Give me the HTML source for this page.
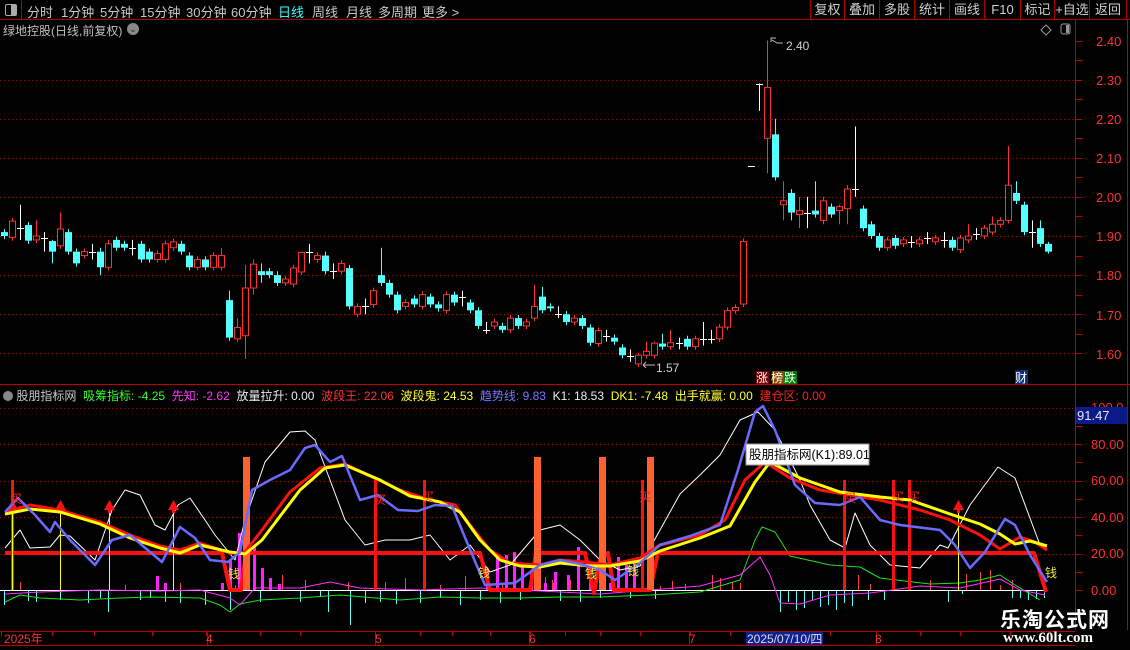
<!DOCTYPE html>
<html><head><meta charset="utf-8">
<style>
html,body{margin:0;padding:0;background:#000;width:1130px;height:650px;overflow:hidden;}
body{font-family:"Liberation Sans","Noto Sans CJK SC",sans-serif;position:relative;}
.t{position:absolute;white-space:nowrap;}
#top{position:absolute;left:0;top:0;width:1130px;height:19px;border-bottom:1px solid #b00000;}
.tab{position:absolute;top:2px;font-size:13px;color:#c8c8c8;}
.btn{position:absolute;top:0;height:19px;border-left:1px solid #b00000;font-size:13px;color:#d0d0d0;text-align:center;line-height:19px;}
svg{position:absolute;left:0;top:0;}
</style></head><body>
<div id="top">
 <div style="position:absolute;left:0;top:0;width:21px;height:19px;border-right:1px solid #b00000;"></div>
 <div style="position:absolute;left:5px;top:4px;width:10px;height:10px;border:1px solid #aaa;border-radius:2px;"><div style="position:absolute;right:0;top:0;width:5px;height:10px;background:#aaa"></div></div>
 <span class="tab" style="left:27px">分时</span>
 <span class="tab" style="left:61px">1分钟</span>
 <span class="tab" style="left:100px">5分钟</span>
 <span class="tab" style="left:140px">15分钟</span>
 <span class="tab" style="left:186px">30分钟</span>
 <span class="tab" style="left:231px">60分钟</span>
 <span class="tab" style="left:278px;color:#3ff">日线</span>
 <span class="tab" style="left:312px">周线</span>
 <span class="tab" style="left:346px">月线</span>
 <span class="tab" style="left:378px">多周期</span>
 <span class="tab" style="left:422px">更多 &gt;</span>
 <div class="btn" style="left:810px;width:33px">复权</div>
 <div class="btn" style="left:844px;width:34px">叠加</div>
 <div class="btn" style="left:879px;width:34px">多股</div>
 <div class="btn" style="left:914px;width:34px">统计</div>
 <div class="btn" style="left:949px;width:34px">画线</div>
 <div class="btn" style="left:984px;width:35px">F10</div>
 <div class="btn" style="left:1020px;width:33px">标记</div>
 <div class="btn" style="left:1054px;width:34px">+自选</div>
 <div class="btn" style="left:1089px;width:36px;border-right:1px solid #b00000">返回</div>
</div>
<div class="t" style="left:3px;top:22px;font-size:12px;color:#c0c0c0">绿地控股(日线,前复权)</div>
<div style="position:absolute;left:127px;top:23px;width:12px;height:12px;border-radius:50%;background:#888;color:#222;font-size:9px;line-height:12px;text-align:center">⌄</div>

<svg id="s" width="1130" height="650" viewBox="0 0 1130 650">
 <g id="grid"></g>
 <g id="cand"></g>
 <g id="ind"></g>
 <line x1="1075.5" y1="20" x2="1075.5" y2="630" stroke="#c00000"/>
 <line x1="1127.5" y1="20" x2="1127.5" y2="630" stroke="#c00000"/>
 <line x1="0" y1="384.5" x2="1130" y2="384.5" stroke="#c00000"/>
 <line x1="0" y1="631.5" x2="1075" y2="631.5" stroke="#c00000"/>
 <line x1="0" y1="645.5" x2="1075" y2="645.5" stroke="#c00000"/>
 <g id="ticks"></g>
 <g font-family="Liberation Sans, sans-serif" font-size="13" fill="#ff3030">
  <text x="1096" y="46">2.40</text><text x="1096" y="85">2.30</text><text x="1096" y="124">2.20</text>
  <text x="1096" y="163">2.10</text><text x="1096" y="202">2.00</text><text x="1096" y="241">1.90</text>
  <text x="1096" y="280">1.80</text><text x="1096" y="320">1.70</text><text x="1096" y="359">1.60</text>
  <text x="1091" y="412">100.0</text><text x="1091" y="449">80.00</text><text x="1091" y="485">60.00</text>
  <text x="1091" y="522">40.00</text><text x="1091" y="558">20.00</text><text x="1091" y="595">0.00</text>
 </g>
 <rect x="1076" y="407" width="51" height="17" fill="#0a1a88"/>
 <text x="1077" y="420" font-family="Liberation Sans, sans-serif" font-size="13" fill="#e8e8e8">91.47</text>
 <path d="M1046 25 L1051 30 L1046 35 L1041 30Z" fill="none" stroke="#999"/>
 <rect x="1061" y="24" width="9" height="10" rx="2" fill="none" stroke="#999"/><rect x="1066" y="25" width="3" height="8" fill="#999"/>
 <path d="M771 42 L771 38 L776 38 M772 40 L777 43 L783 43" stroke="#bbb" fill="none"/>
 <text x="786" y="50" font-family="Liberation Sans, sans-serif" font-size="12" fill="#d0d0d0">2.40</text>
 <path d="M643 365 L655 365 M643 365 L646 362 M643 365 L646 368" stroke="#bbb" fill="none"/>
 <text x="656" y="372" font-family="Liberation Sans, sans-serif" font-size="12" fill="#d0d0d0">1.57</text>
 <rect x="756" y="371" width="13" height="13" fill="#7a0000"/><text x="756" y="382" font-size="12" fill="#fff" font-family="Noto Sans CJK SC, sans-serif">涨</text>
 <rect x="772" y="371" width="12" height="13" fill="#8a4a00"/><text x="771" y="382" font-size="12" fill="#fff" font-family="Noto Sans CJK SC, sans-serif">榜</text>
 <rect x="784" y="371" width="13" height="13" fill="#007a00"/><text x="784" y="382" font-size="12" fill="#fff" font-family="Noto Sans CJK SC, sans-serif">跌</text>
 <rect x="1015" y="370" width="13" height="14" fill="#0a3070"/><text x="1015" y="382" font-size="12" fill="#fff" font-family="Noto Sans CJK SC, sans-serif">财</text>
 <g font-family="Noto Sans CJK SC, sans-serif" font-size="12" fill="#ff2020">
  <text x="10" y="503">买</text><text x="374" y="504">买</text><text x="422" y="501">买</text><text x="639" y="501">买</text>
  <text x="844" y="502">买</text><text x="892" y="501">买</text><text x="908" y="501">买</text>
 </g>
 <g font-family="Noto Sans CJK SC, sans-serif" font-size="12" fill="#e8e840">
  <text x="228" y="578">钱</text><text x="478" y="577">钱</text><text x="585" y="578">钱</text><text x="627" y="575">钱</text><text x="1045" y="577">钱</text>
 </g>
 <rect x="746" y="444" width="123" height="21" fill="#fff" stroke="#999"/>
 <text x="749" y="459" font-family="Liberation Sans, Noto Sans CJK SC, sans-serif" font-size="12.5" fill="#000">股朋指标网(K1):89.01</text>
 <g font-family="Liberation Sans, Noto Sans CJK SC, sans-serif" font-size="12" fill="#ff3030">
  <text x="4" y="643">2025年</text><text x="206" y="643">4</text><text x="375" y="643">5</text><text x="529" y="643">6</text><text x="689" y="643">7</text><text x="875" y="643">8</text>
 </g>
 <rect x="746" y="632" width="77" height="13" fill="#102090"/>
 <text x="747" y="643" font-family="Liberation Sans, Noto Sans CJK SC, sans-serif" font-size="12" fill="#ddd">2025/07/10/四</text>
</svg>

<div class="t" style="left:3px;top:387px;font-size:12px;color:#ddd">
 <span style="display:inline-block;width:10px;height:10px;border-radius:50%;background:#888;vertical-align:-1px"></span>
 <span style="color:#c8c8c8">股朋指标网</span>
 <span style="color:#3f3">&nbsp;吸筹指标: -4.25</span>
 <span style="color:#f3f">&nbsp;先知: -2.62</span>
 <span style="color:#eee">&nbsp;放量拉升: 0.00</span>
 <span style="color:#f33">&nbsp;波段王: 22.06</span>
 <span style="color:#ff3">&nbsp;波段鬼: 24.53</span>
 <span style="color:#77f">&nbsp;趋势线: 9.83</span>
 <span style="color:#eee">&nbsp;K1: 18.53</span>
 <span style="color:#ff3">&nbsp;DK1: -7.48</span>
 <span style="color:#ff3">&nbsp;出手就赢: 0.00</span>
 <span style="color:#f22">&nbsp;建仓区: 0.00</span>
</div>
<div class="t" style="left:1000px;top:604px;font-size:21px;font-weight:bold;color:#fff;font-family:'Noto Sans CJK SC',sans-serif;letter-spacing:1px">乐淘公式网</div>
<div class="t" style="left:1003px;top:630px;font-size:15px;font-weight:bold;color:#fff;font-family:'Liberation Serif',serif">www.60lt.com</div>

<script>
var NS="http://www.w3.org/2000/svg";
function el(p,tag,a){var e=document.createElementNS(NS,tag);for(var k in a)e.setAttribute(k,a[k]);p.appendChild(e);return e;}
var G=document.getElementById('grid'),C=document.getElementById('cand'),I=document.getElementById('ind'),T=document.getElementById('ticks');
function py(p){return 40.5+(2.40-p)*391;}
function iy(v){return 590-v*1.825;}
[2.3,2.2,2.1,2.0,1.9,1.8,1.7,1.6].forEach(function(p){el(G,'line',{x1:0,x2:1075,y1:Math.round(py(p))+.5,y2:Math.round(py(p))+.5,stroke:'#a00000','stroke-dasharray':'1 3'});});
[100,80,60,40,20].forEach(function(v){el(G,'line',{x1:0,x2:1075,y1:Math.round(iy(v))+.5,y2:Math.round(iy(v))+.5,stroke:'#a00000','stroke-dasharray':'1 3'});});
for(var p=1.6;p<=2.41;p+=0.05){var y=Math.round(py(p))+.5;el(T,'line',{x1:1076,x2:1082,y1:y,y2:y,stroke:'#c00000'});}
for(var v=0;v<=100;v+=10){var y=Math.round(iy(v))+.5;el(T,'line',{x1:1076,x2:1082,y1:y,y2:y,stroke:'#c00000'});}
[1,52,94,152,206,260,300,375,420,452,490,530,565,600,640,690,730,790,830,876,920,960,1010,1050].forEach(function(x){el(T,'line',{x1:x+.5,x2:x+.5,y1:632,y2:636,stroke:'#c00000'});});
[207,375,529,689,876].forEach(function(x){el(T,'line',{x1:x+.5,x2:x+.5,y1:632,y2:645,stroke:'#c00000'});});
var D=[[1.91,1.90],[1.896,1.938],[1.92,1.92,1.98,1.89],[1.928,1.888],[1.89,1.90,1.94],[1.895,1.895,1.91,1.86],[1.887,1.86,1.89,1.83],[1.875,1.918,1.96],[1.91,1.86],[1.86,1.83],
[1.85,1.86],[1.86,1.86,1.88,1.84],[1.86,1.82,1.87,1.80],[1.82,1.88,1.89],[1.89,1.87],[1.88,1.87],[1.87,1.87,1.89,1.85],[1.88,1.84],[1.86,1.84],[1.84,1.855],
[1.84,1.88],[1.87,1.885],[1.88,1.86],[1.85,1.82],[1.82,1.84],[1.84,1.82],[1.82,1.85],[1.82,1.85,1.87],[1.736,1.64,1.76],[1.637,1.666,1.69,1.63],
[1.645,1.767,1.826,1.586],[1.767,1.828,1.84,1.75],[1.81,1.80,1.83,1.78],[1.81,1.80],[1.80,1.78,1.81],[1.78,1.79],[1.777,1.818],[1.808,1.858,1.86,1.80],[1.86,1.86,1.88,1.83],[1.84,1.85],
[1.85,1.81,1.86],[1.81,1.81,1.83,1.79],[1.81,1.83],[1.818,1.72],[1.70,1.72],[1.72,1.72,1.74,1.70],[1.725,1.76],[1.80,1.78,1.87],[1.78,1.75],[1.75,1.71],
[1.72,1.73],[1.74,1.725],[1.72,1.75],[1.745,1.725],[1.725,1.715],[1.71,1.75],[1.75,1.73],[1.745,1.745,1.76,1.72],[1.73,1.71],[1.71,1.67],
[1.66,1.66,1.68,1.65],[1.67,1.68],[1.67,1.66],[1.66,1.69],[1.69,1.67],[1.67,1.68],[1.69,1.72,1.775],[1.745,1.71,1.77],[1.72,1.715],[1.70,1.70,1.72,1.69],
[1.70,1.68],[1.68,1.69],[1.69,1.67],[1.666,1.627],[1.625,1.658],[1.645,1.645,1.66,1.63],[1.64,1.63],[1.615,1.595],[1.592,1.592,1.61,1.578],[1.573,1.595,1.60,1.565],
[1.595,1.605,1.63],[1.595,1.626,1.63],[1.625,1.617,1.65],[1.617,1.627,1.66],[1.626,1.626,1.64,1.61],[1.637,1.617],[1.617,1.637],[1.637,1.637,1.68,1.62],[1.637,1.637,1.66,1.625],[1.637,1.667],
[1.667,1.709],[1.709,1.717],[1.726,1.886],[2.08,2.08,2.08,2.08],[2.29,2.29,2.29,2.22],[2.15,2.28,2.40,2.06],[2.16,2.05,2.20],[1.98,1.99,2.04,1.94],[2.01,1.96,2.02,1.94],[1.955,1.965,2.00,1.92],
[1.96,1.96,2.00,1.92],[1.965,1.955,2.04],[1.94,1.99,2.00,1.93],[1.975,1.955],[1.965,1.975,1.98,1.93],[1.97,2.02,2.03,1.93],[2.02,2.02,2.18,2.00],[1.97,1.92],[1.93,1.90],[1.90,1.87],
[1.87,1.89],[1.895,1.875],[1.88,1.89],[1.885,1.885,1.90,1.87],[1.88,1.89],[1.895,1.895,1.91,1.88],[1.885,1.895],[1.89,1.89,1.91,1.87],[1.89,1.87],[1.865,1.895],
[1.89,1.90,1.93],[1.905,1.905,1.92,1.89],[1.90,1.92],[1.91,1.93,1.95],[1.93,1.94],[1.94,2.03,2.13],[2.01,1.99,2.04],[1.98,1.91],[1.91,1.91,1.94,1.87],[1.92,1.88,1.94],
[1.88,1.86,1.885,1.855]];
D.forEach(function(d,i){
 var x=Math.round(4+8.03*i),o=d[0],c=d[1],h=d.length>2?d[2]:Math.max(o,c)+0.008,l=d.length>3?d[3]:Math.min(o,c)-0.008;
 var yo=py(o),yc=py(c),yh=py(h),yl=py(l);
 var col=Math.abs(yo-yc)<1.5?'#fff':(c>o?'#ff3030':'#54ffff');
 el(C,'line',{x1:x+.5,x2:x+.5,y1:yh,y2:yl,stroke:col});
 if(col=='#fff'){el(C,'line',{x1:x-3,x2:x+4,y1:Math.round(yc)+.5,y2:Math.round(yc)+.5,stroke:col});}
 else if(col=='#ff3030'){el(C,'rect',{x:x-2.5,y:Math.min(yo,yc),width:6,height:Math.abs(yo-yc),fill:'#000',stroke:col});}
 else{el(C,'rect',{x:x-3,y:Math.min(yo,yc),width:7,height:Math.max(1,Math.abs(yo-yc)),fill:col});}
});
function pl(pts,col,w){el(I,'polyline',{points:pts.map(function(p){return p.join(',')}).join(' '),fill:'none',stroke:col,'stroke-width':w,'stroke-linejoin':'round'});}
var neg=[[4,605],[28,601],[36,602],[60,600],[88,603],[100,598],[108,612],[140,600],[150,598],[165,602],[180,603],[205,605],[230,610],[260,602],[300,602],[320,597],[328,612],[350,625],[365,603],[380,602],[396,604],[420,603],[440,598],[460,605],[480,600],[500,603],[520,600],[560,601],[580,602],[600,598],[630,598],[655,599],[780,612],[788,602],[796,610],[804,608],[812,600],[820,607],[828,605],[836,610],[844,603],[852,606],[868,600],[884,600],[948,602],[962,594],[1012,598],[1020,598],[1028,600],[1036,599],[1044,598]];
neg.forEach(function(n){el(I,'line',{x1:n[0]+.5,x2:n[0]+.5,y1:591,y2:n[1],stroke:'#54ffff'});});
[[20,582],[125,585],[180,583],[235,585],[255,570],[282,575],[305,580],[348,582],[385,582],[405,578],[440,585],[465,576],[502,584],[545,577],[552,580],[570,580],[660,586],[672,581],[685,584],[712,575],[720,578],[732,582],[740,583],[858,575],[870,584],[930,580],[966,574],[980,572],[990,570],[1000,585],[1012,580]].forEach(function(n){el(I,'line',{x1:n[0]+.5,x2:n[0]+.5,y1:590,y2:n[1],stroke:'#ff4040'});});
[[157,576],[165,583],[222,583],[230,560],[239,533],[246,545],[254,547],[262,568],[270,578],[279,584],[487,570],[497,558],[506,555],[514,552],[522,565],[531,570],[554,583],[545,583],[555,572],[568,575],[578,547],[590,562],[610,583],[618,557],[626,565],[634,560]].forEach(function(n){el(I,'rect',{x:n[0]-1,y:n[1],width:3,height:590-n[1],fill:'#ff20ff'});});
el(I,'line',{x1:0,x2:1047,y1:590.5,y2:590.5,stroke:'#fff'});
pl([[5,602],[20,595],[40,598],[80,600],[120,598],[150,597],[200,598],[220,605],[230,612],[240,604],[260,600],[300,598],[340,595],[400,600],[440,597],[480,598],[520,598],[560,597],[600,597],[650,595],[700,592],[740,580],[755,540],[762,527],[775,532],[790,556],[830,565],[860,567],[880,578],[930,584],[960,583],[980,580],[1000,575],[1015,585],[1040,600]],'#20e020',1);
pl([[5,594],[40,592],[100,590],[160,591],[200,590],[230,598],[240,605],[255,588],[300,588],[330,582],[360,588],[420,590],[480,588],[520,590],[560,592],[600,594],[650,590],[700,586],[740,575],[760,557],[770,575],[780,603],[800,604],[830,595],[870,593],[920,586],[960,588],[1000,579],[1020,590],[1045,595]],'#ff30ff',1);
pl([[5,548],[20,530],[30,548],[50,547],[60,535],[70,536],[95,560],[112,510],[125,490],[140,495],[155,525],[165,530],[178,505],[190,498],[205,520],[215,535],[235,560],[245,520],[265,462],[290,432],[305,431],[315,440],[330,480],[345,520],[365,545],[385,540],[410,540],[430,535],[450,560],[470,545],[490,572],[510,565],[540,530],[560,525],[580,540],[600,560],[620,570],[640,566],[660,530],[680,494],[700,475],[720,455],[740,420],[758,412],[775,430],[800,480],[810,505],[830,540],[845,548],[855,513],[870,545],[890,565],[920,568],[940,545],[948,548],[970,505],[998,467],[1015,478],[1040,545]],'#fff',1);
pl([[5,553],[222,553],[230,590],[241,590],[246,553],[480,553],[490,590],[530,590],[536,553],[585,553],[594,593],[600,560],[608,553],[614,590],[650,590],[658,553],[1034,553],[1046,592]],'#ff1010',4);
[246,537,602,650].forEach(function(x){el(I,'rect',{x:x-3,y:457,width:7,height:133,fill:'#ff6030'});});
[[12,480],[375,480],[424,480],[642,480],[844,480],[893,480],[909,480]].forEach(function(n){el(I,'rect',{x:n[0]-1,y:n[1],width:3,height:590-n[1],fill:'#ff1010'});});
[12,60,109,173,958].forEach(function(x){el(I,'line',{x1:x+.5,x2:x+.5,y1:505,y2:590,stroke:'#ffff00'});el(I,'path',{d:'M'+(x-5)+' 510 L'+(x+.5)+' 500 L'+(x+6)+' 510 Z',fill:'#ff1010'});el(I,'rect',{x:x-1,y:508,width:3,height:5,fill:'#ff1010'});});
pl([[5,512],[30,505],[60,510],[100,522],[130,535],[160,546],[180,550],[200,543],[230,553],[245,552],[262,530],[290,492],[320,468],[345,464],[370,476],[400,490],[430,500],[455,505],[470,525],[490,550],[510,563],[540,565],[560,560],[585,562],[610,565],[640,558],[660,545],[700,535],[725,520],[745,480],[765,462],[790,478],[820,490],[850,495],[880,500],[920,510],[950,520],[980,535],[1000,549],[1020,537],[1035,542],[1047,550]],'#ff1010',3);
pl([[5,514],[30,509],[60,512],[100,524],[130,538],[160,548],[180,553],[200,545],[230,552],[245,554],[262,540],[300,490],[325,468],[345,465],[380,480],[410,496],[440,502],[460,512],[480,540],[500,560],[520,566],[540,567],[560,563],[590,566],[610,566],[640,561],[660,551],[700,538],[730,526],[755,482],[770,462],[800,478],[840,492],[880,497],[910,500],[950,514],[980,524],[1000,534],[1015,544],[1030,541],[1047,546]],'#ffff00',3);
pl([[5,512],[18,498],[35,515],[50,532],[55,522],[70,540],[95,565],[112,540],[130,535],[150,552],[162,562],[180,527],[195,538],[210,560],[228,562],[240,552],[252,490],[270,480],[290,470],[305,448],[315,445],[330,462],[342,456],[360,500],[378,495],[398,510],[418,511],[435,505],[452,506],[466,540],[485,585],[515,583],[540,565],[560,560],[580,564],[600,570],[615,580],[640,563],[660,545],[690,536],[720,525],[738,470],[755,412],[763,406],[775,430],[795,485],[815,503],[840,505],[860,497],[880,520],[900,525],[940,530],[955,545],[970,568],[985,552],[1005,519],[1015,525],[1030,555],[1047,582]],'#6a6aff',2.5);
</script>
</body></html>
